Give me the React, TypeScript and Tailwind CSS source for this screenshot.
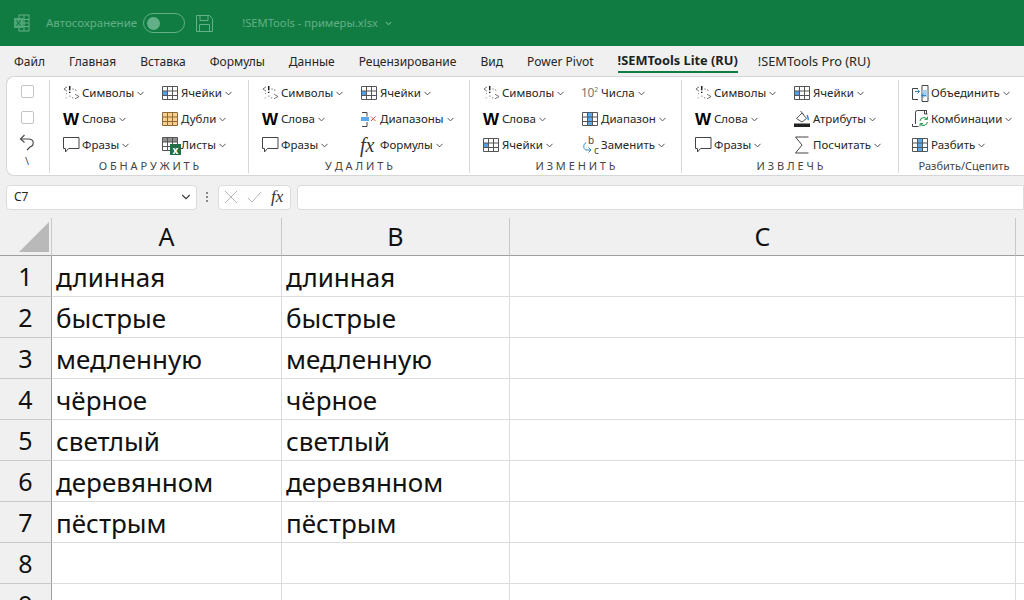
import React from 'react';
import { ChevronDown } from 'lucide-react';

const Symbols = () => (
  <svg width="17" height="16" viewBox="0 0 19 18" fill="none" stroke="#666" strokeWidth="1">
    <path d="M4.500 2 1 4.500 4.500 7" />
    <path d="M7.500 1v5M7.500 7.500v1.500" stroke="#222" strokeWidth="1.700" />
    <path d="M10.500 4.500h1.500M13.500 5.500l1.500.5M7 12.500h1.500M10 14.500h1.500" />
    <path d="M3.500 9.500h1.500M3 14.500h1.500" strokeDasharray="1 1" />
    <path d="M13.500 10.500 18 13l-4.500 2.500" />
  </svg>
);

const Word = () => (
  <span className="block w-5 font-['Liberation_Sans',sans-serif] text-[17px] leading-none font-bold text-black">W</span>
);

const Phrase = () => (
  <svg width="18" height="18" viewBox="0 0 18 18" fill="none" stroke="#444" strokeWidth="1">
    <path d="M.5 1.500h15.500v11H5.500L2.500 16v-3.500h-2z" />
  </svg>
);

// table with optional filled cells, used by most of the grid-like buttons
const Table = ({ fill, cells = [], stroke = '#555' }: { fill?: string; cells?: number[][]; stroke?: string }) => (
  <svg width="17" height="15" viewBox="0 0 17 15" fill="none">
    {cells.map(([x, y, w, h], i) => (
      <rect key={i} x={x} y={y} width={w} height={h} fill={fill} />
    ))}
    <path d="M.5.5h15v13H.5zM5.500.5v13M10.500.5v13M.5 5h15M.5 9.500h15" stroke={stroke} />
  </svg>
);

const Cells = () => <Table fill="#4ea1e8" cells={[[1, 5, 5, 5]]} />;
const Dupes = () => <Table fill="#fbcf8b" cells={[[1, 1, 14, 12]]} stroke="#8a6a3a" />;
const Column = () => <Table fill="#58a9ee" cells={[[6, 1, 4, 12]]} />;

const Sheets = () => (
  <div className="relative h-[16px] w-[17px]">
    <Table fill="#8f8f8f" cells={[[1, 1, 14, 4]]} />
    <span className="absolute right-[-2px] bottom-[-2px] flex h-[11px] w-[11px] items-center justify-center bg-[#1e7145] text-[10px] leading-none font-bold text-white">
      x
    </span>
  </div>
);

const Ranges = () => (
  <svg width="17" height="17" viewBox="0 0 17 17" fill="none">
    <path d="M1 1.500h5v4M6 11v4.500H1" stroke="#444" />
    <rect x="0" y="6" width="8" height="4" fill="#58a9ee" />
    <path d="M10 5.500l4.500 4.500M14.500 5.500 10 10" stroke="#d9534f" />
  </svg>
);

const Fx = () => (
  <span className="-ml-[1px] block w-5 font-['Liberation_Serif',serif] text-[20px] leading-none text-[#333] italic">fx</span>
);

const Numbers = () => (
  <span className="-ml-[1px] block w-5 font-['Noto_Sans',sans-serif] text-[12px] leading-none tracking-tight whitespace-nowrap text-[#777]">
    10<sup className="-top-[5px] text-[7px]">2</sup>
  </span>
);

const Replace = () => (
  <div className="relative h-[18px] w-[18px] font-['Noto_Sans',sans-serif] text-[10px] leading-none text-[#444]">
    <svg className="absolute top-[5px] left-0" width="10" height="13" viewBox="0 0 10 13" fill="none" stroke="#2f86c9">
      <path d="M4 1.500C1 3.500 1 8 4 9h5M6.500 6.500 9 9l-2.500 2.500" />
    </svg>
    <span className="absolute top-[-1px] left-[6px]">b</span>
    <span className="absolute top-[9px] left-[12px]">c</span>
  </div>
);

const Attrs = () => (
  <svg width="17" height="18" viewBox="0 0 17 18" fill="none">
    <path d="M2.500 8.500 8 3l4.500 5.500-4.500 3.500z" stroke="#555" />
    <path d="M6.500 1 10 5" stroke="#555" />
    <path d="M13.500 5c-.5 2 1.500 3.500.5 5" stroke="#2f86c9" strokeWidth="1.500" />
    <rect x="0" y="13.500" width="16" height="3.500" fill="#222" />
  </svg>
);

const SigmaIcon = () => (
  <svg width="16" height="18" viewBox="0 0 16 18" fill="none" stroke="#444">
    <path d="M14.500 1H1.500l6.500 8-6.500 8h13" />
  </svg>
);

const Merge = () => (
  <svg width="17" height="17" viewBox="0 0 17 17" fill="none">
    <path d="M6 3.500H.5v11H6M10 .5h6v16h-6z" stroke="#444" />
    <rect x="10.500" y="5" width="5" height="7" fill="#a8d3f2" />
    <path d="M3 6.500h4.500M5.500 4.500l2 2-2 2M14 10.500H9.500M11.500 8.500l-2 2 2 2" stroke="#2f86c9" />
  </svg>
);

const Combo = () => (
  <svg width="17" height="18" viewBox="0 0 17 18" fill="none">
    <path d="M3.500 14V2.500a2 2 0 0 1 2-2h9V4M.5 14v2.500h6M14.500 .5h-2v3.500h3" stroke="#444" />
    <path d="M8 11a4 4 0 0 1 7-2M15.500 12a4 4 0 0 1-7 2" stroke="#3aa15c" strokeWidth="1.200" />
    <path d="M15.500 6.500V9.500h-3M8 16.500v-3h3" stroke="#3aa15c" />
  </svg>
);

const UndoIcon = () => (
  <svg width="16" height="17" viewBox="0 0 16 17" fill="none" stroke="#444" strokeWidth="1.100">
    <path d="M5.500 1 1.500 5l4 3.500" />
    <path d="M1.500 5h8c6 0 6 6.500 1.500 8l-3 3" />
  </svg>
);

const groups = [
  {
    title: 'О Б Н А Р У Ж И Т Ь',
    width: 'w-[199px]',
    items: [
      [<Symbols />, 'Символы'],
      [<Cells />, 'Ячейки'],
      [<Word />, 'Слова'],
      [<Dupes />, 'Дубли'],
      [<Phrase />, 'Фразы'],
      [<Sheets />, 'Листы'],
    ],
  },
  {
    title: 'У Д А Л И Т Ь',
    width: 'w-[221px]',
    items: [
      [<Symbols />, 'Символы'],
      [<Cells />, 'Ячейки'],
      [<Word />, 'Слова'],
      [<Ranges />, 'Диапазоны'],
      [<Phrase />, 'Фразы'],
      [<Fx />, 'Формулы'],
    ],
  },
  {
    title: 'И З М Е Н И Т Ь',
    width: 'w-[212px]',
    items: [
      [<Symbols />, 'Символы'],
      [<Numbers />, 'Числа'],
      [<Word />, 'Слова'],
      [<Column />, 'Диапазон'],
      [<Cells />, 'Ячейки'],
      [<Replace />, 'Заменить'],
    ],
  },
  {
    title: 'И З В Л Е Ч Ь',
    width: 'w-[217px]',
    items: [
      [<Symbols />, 'Символы'],
      [<Cells />, 'Ячейки'],
      [<Word />, 'Слова'],
      [<Attrs />, 'Атрибуты'],
      [<Phrase />, 'Фразы'],
      [<SigmaIcon />, 'Посчитать'],
    ],
  },
] as const;

const tabs = ['Файл', 'Главная', 'Вставка', 'Формулы', 'Данные', 'Рецензирование', 'Вид', 'Power Pivot'];
const words = ['длинная', 'быстрые', 'медленную', 'чёрное', 'светлый', 'деревянном', 'пёстрым', '', ''];

const RibbonItem = ({ icon, label }: { icon: React.ReactNode; label: string }) => (
  <div className="flex h-[26px] shrink-0 items-center">
    <span className="flex w-[20px] shrink-0 items-center">{icon}</span>
    <span className="-ml-[1px]">{label}</span>
    <ChevronDown className="ml-[1px] h-[11px] w-[11px] text-[#444]" strokeWidth={2} />
  </div>
);

const HeaderCell = ({ children }: { children: React.ReactNode }) => (
  <div className="flex items-center justify-center border-r border-b border-r-[#c8c8c8] border-b-[#9f9f9f] bg-[#f0f0f0] text-[25px]">
    {children}
  </div>
);

export default function App() {
  return (
    <div className="flex h-[600px] w-[1024px] flex-col overflow-hidden bg-[#f0f0f0] font-['Noto_Sans',sans-serif] text-[#262626]">
      <header className="flex h-[46px] shrink-0 items-center bg-[#107c41] pl-[14px] text-[11.5px] text-[#63b088]">
        <svg width="16" height="18" viewBox="0 0 16 18" fill="none">
          <rect x="5" y="1" width="10" height="16" stroke="#63b088" />
          <path d="M5 5.500h10M5 9h10M5 12.500h10M10 1v16" stroke="#63b088" />
          <rect x="0" y="4" width="9" height="10" fill="#4fa478" />
          <path d="M2.500 6.500l4 5M6.500 6.500l-4 5" stroke="#107c41" strokeWidth="1.200" />
        </svg>
        <span className="ml-[16px]">Автосохранение</span>
        <div className="ml-[6px] flex h-[20px] w-[42px] items-center rounded-full border border-[#63b088] pl-[3px]">
          <span className="h-[13px] w-[13px] rounded-full bg-[#63b088]" />
        </div>
        <svg className="ml-[11px]" width="17" height="17" viewBox="0 0 17 17" fill="none" stroke="#63b088">
          <path d="M.5.500h13l3 3v13H.5zM4 .5v5h8v-5M3.500 16.500v-7h10v7" />
        </svg>
        <span className="ml-[29px] text-[11.2px]">!SEMTools - примеры.xlsx</span>
        <ChevronDown className="ml-[6px] h-[9px] w-[9px]" strokeWidth={3} />
      </header>

      <nav className="flex h-[30px] shrink-0 items-center gap-[24px] pt-[2px] pl-[14px] text-[12px]">
        {tabs.map((t) => (
          <span key={t}>{t}</span>
        ))}
        <span className="flex h-[22px] items-center border-b-2 border-[#107c41] text-[12.8px] font-bold text-[#1f1f1f]">
          !SEMTools Lite (RU)
        </span>
        <span className="-ml-[4px] text-[12.8px]">!SEMTools Pro (RU)</span>
      </nav>

      <section className="ml-[6px] flex h-[100px] shrink-0 rounded-l-lg border-y border-l border-[#d6d6d6] bg-white pt-[3px] pb-[2px] text-[11.5px]">
        <div className="flex w-[43px] shrink-0 flex-col items-center border-r border-[#d6d6d6] pr-[2px]">
          <span className="mt-[5px] h-[13px] w-[13px] rounded-[2px] border border-[#c4c4c4] bg-white" />
          <span className="mt-[13px] h-[13px] w-[13px] rounded-[2px] border border-[#c4c4c4] bg-white" />
          <span className="mt-[10px] h-[17px]">
            <UndoIcon />
          </span>
          <span className="mt-[3px] text-[11px] leading-[14px] text-[#555]">\</span>
        </div>
        {groups.map((g) => (
          <div key={g.title} className={`flex shrink-0 flex-col border-r border-[#d6d6d6] pl-[13px] ${g.width}`}>
            <div className="grid grid-cols-[99px_1fr]">
              {g.items.map(([icon, label]) => (
                <RibbonItem key={label} icon={icon} label={label} />
              ))}
            </div>
            <div className="-ml-[13px] text-center text-[11px] leading-[16px] text-[#444]">{g.title}</div>
          </div>
        ))}
        <div className="flex flex-1 flex-col pl-[13px]">
          <RibbonItem icon={<Merge />} label="Объединить" />
          <RibbonItem icon={<Combo />} label="Комбинации" />
          <RibbonItem icon={<Column />} label="Разбить" />
          <div className="-ml-[8px] text-center text-[11px] leading-[16px] text-[#444]">Разбить/Сцепить</div>
        </div>
      </section>

      <div className="flex h-[42px] shrink-0 items-center pl-[6px] text-[12px]">
        <div className="flex h-[25px] w-[191px] items-center justify-between rounded-[4px] border border-[#dcdcdc] bg-white pr-[3px] pl-[7px]">
          <span>C7</span>
          <ChevronDown className="h-[14px] w-[14px] text-[#444]" />
        </div>
        <div className="mx-[9px] flex w-[3px] flex-col gap-[2px]">
          <span className="h-[2px] w-[2px] bg-[#888]" />
          <span className="h-[2px] w-[2px] bg-[#888]" />
          <span className="h-[2px] w-[2px] bg-[#888]" />
        </div>
        <div className="flex h-[25px] w-[73px] items-center rounded-[4px] border border-[#dcdcdc] bg-white pl-[5px]">
          <svg width="14" height="14" viewBox="0 0 14 14" stroke="#b5b5b5" fill="none">
            <path d="M1 1l12 12M13 1 1 13" />
          </svg>
          <svg className="ml-[9px]" width="15" height="14" viewBox="0 0 15 14" stroke="#b5b5b5" fill="none">
            <path d="M1 8l4 4L14 2" />
          </svg>
          <span className="ml-[9px] font-['Liberation_Serif',serif] text-[17px] text-[#333] italic">fx</span>
        </div>
        <div className="ml-[6px] h-[25px] flex-1 rounded-l-[4px] border border-[#dcdcdc] bg-white" />
      </div>

      <div className="grid flex-1 grid-cols-[52px_230px_228px_506px_1fr] grid-rows-[38px_repeat(9,41px)] bg-white text-[#111]">
        <div className="relative border-r border-b border-r-[#c8c8c8] border-b-[#9f9f9f] bg-[#f0f0f0]">
          <div className="absolute right-[2px] bottom-[3px] h-[30px] w-[30px] bg-[#b9b9b9] [clip-path:polygon(100%_0,100%_100%,0_100%)]" />
        </div>
        <HeaderCell>A</HeaderCell>
        <HeaderCell>B</HeaderCell>
        <HeaderCell>C</HeaderCell>
        <div className="border-b border-b-[#9f9f9f] bg-[#f0f0f0]" />
        {words.map((w, i) => (
          <React.Fragment key={i}>
            <div className="flex items-center justify-center border-r border-b border-r-[#9f9f9f] border-b-[#c8c8c8] bg-[#f0f0f0] pt-[1px] text-[25px]">
              {i + 1}
            </div>
            <div className="flex items-center border-r border-b border-[#dcdcdc] pt-[3px] pl-[4px] text-[26px]">{w}</div>
            <div className="flex items-center border-r border-b border-[#dcdcdc] pt-[3px] pl-[4px] text-[26px]">{w}</div>
            <div className="border-r border-b border-[#dcdcdc]" />
            <div className="border-b border-[#dcdcdc]" />
          </React.Fragment>
        ))}
      </div>
    </div>
  );
}
